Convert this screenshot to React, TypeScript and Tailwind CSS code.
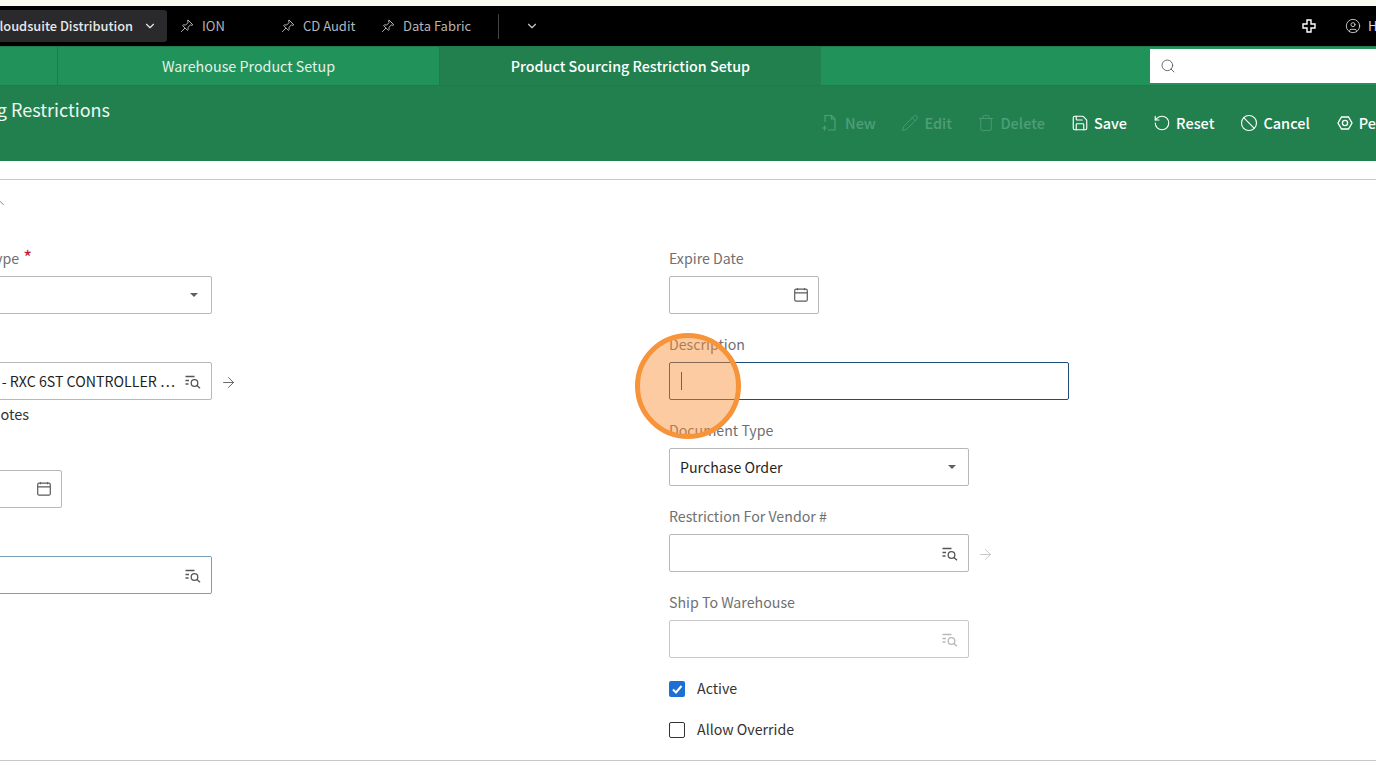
import { Ban, ChevronDown, ChevronUp, CircleUser, RotateCcw, Save, Search, ArrowRight, Pencil, Trash } from 'lucide-react'

function PinIcon() {
  return (
    <svg width="14" height="14" viewBox="0 0 14 14" fill="none" stroke="#b5b5b5" strokeWidth="1" strokeLinejoin="round" strokeLinecap="round">
      <path d="M8.200 1.200 12.800 5.800 11.900 6.300 10.300 6 7.900 8.400 8.200 10.600 7.300 11.400 2.600 6.700 3.400 5.800 5.600 6.100 8 3.700 7.700 2.100Z" />
      <path d="M4.800 9.200 1.400 12.600" />
    </svg>
  )
}

function NewIcon() {
  return (
    <svg width="16" height="18" viewBox="0 0 16 18" fill="none" stroke="currentColor" strokeWidth="1.200">
      <path d="M4 8V1.500h6.500L14 5v11H7" />
      <path d="M10.500 1.500V5H14" />
      <path d="M1 14h5M3.500 11.500v5" />
    </svg>
  )
}

function HexIcon() {
  return (
    <svg width="16" height="16" viewBox="0 0 16 16" fill="none" stroke="currentColor" strokeWidth="1.300">
      <path d="M4.500 2h7L15 8l-3.500 6h-7L1 8Z" />
      <circle cx="8" cy="8" r="2.600" />
    </svg>
  )
}

function PlusIcon() {
  return (
    <svg width="14" height="14" viewBox="0 0 14 14" fill="none" stroke="white" strokeWidth="1.400" className="shrink-0">
      <path d="M5 1h4v4h4v4H9v4H5V9H1V5h4Z" />
    </svg>
  )
}

function CalendarIcon() {
  return (
    <svg width="14" height="14" viewBox="0 0 14 14" fill="none" stroke="#5a5a5a" strokeWidth="1.200">
      <rect x="0.700" y="1.200" width="12.600" height="12" rx="1.500" />
      <path d="M1 4.800h12M3.500 0.300v2M10.500 0.300v2" />
    </svg>
  )
}

function LookupIcon({ muted }: { muted?: boolean }) {
  return (
    <svg width="16" height="14" viewBox="0 0 16 14" fill="none" stroke={muted ? '#b8b8b8' : '#555555'} strokeWidth="1.300">
      <path d="M0.500 1.500h9M0.500 5.500h3.500M0.500 9h3" />
      <circle cx="9.500" cy="8" r="3.300" />
      <path d="M12 10.500 15 13.300" />
    </svg>
  )
}

function Caret() {
  return <span className="h-0 w-0 border-x-[4px] border-t-[4px] border-x-transparent border-t-[#5f5f5f]" />
}

function Label({ children }: { children: React.ReactNode }) {
  return <div className="h-[24px] text-[14.200px] leading-[12px] text-[#707070] whitespace-nowrap">{children}</div>
}

function Box({ className, children }: { className: string; children?: React.ReactNode }) {
  return (
    <div className={`flex h-[38px] items-center rounded-[2px] border bg-white text-[14.200px] text-[#1f1f1f] ${className}`}>
      {children}
    </div>
  )
}

const disabledActions = [
  { label: 'New', gap: 'gap-[8px]', icon: <NewIcon /> },
  { label: 'Edit', gap: 'gap-[6px]', icon: <Pencil size={18} strokeWidth={1.1} className="-mx-[1px]" /> },
  { label: 'Delete', gap: 'gap-[6px]', icon: <Trash size={18} strokeWidth={1.1} className="-mx-[1px]" /> },
]

const actions = [
  { label: 'Save', icon: <Save size={18} strokeWidth={1.5} className="-mx-[1px]" /> },
  { label: 'Reset', icon: <RotateCcw size={18} strokeWidth={1.5} className="-mx-[1px]" /> },
  { label: 'Cancel', icon: <Ban size={18} strokeWidth={1.5} className="-mx-[1px]" /> },
  { label: 'Personalize', icon: <HexIcon /> },
]

export default function App() {
  return (
    <div className="relative h-[769px] w-[1376px] overflow-hidden bg-white font-['Noto_Sans_CJK_SC','Noto_Sans',sans-serif]">
      <div className="h-[6px] bg-[#f9fbf1]" />

      <div className="flex h-[40px] items-center bg-black text-[13px]">
        <div className="flex h-[32px] w-[167px] items-center justify-end rounded-r-[3px] bg-[#2a2a2c] pr-[10px] text-[12.800px] font-medium text-[#e8e8e8] whitespace-nowrap">
          <span>Cloudsuite Distribution</span>
          <ChevronDown size={14} className="ml-[10px] shrink-0" />
        </div>
        <div className="ml-[13px] flex w-[101px] items-center gap-[8px] text-[#b5b5b5]"><PinIcon /> ION</div>
        <div className="flex w-[100px] items-center gap-[8px] text-[#b5b5b5]"><PinIcon /> CD Audit</div>
        <div className="flex w-[117px] items-center gap-[8px] text-[#b5b5b5] whitespace-nowrap"><PinIcon /> Data Fabric</div>
        <div className="h-[25px] w-px bg-[#444444]" />
        <ChevronDown size={14} className="ml-[26px] text-[#c8c8c8]" />
        <div className="ml-auto flex w-[74px] items-center gap-[29px] text-white">
          <PlusIcon />
          <div className="flex items-center gap-[7px] text-[#d8d8d8]">
            <CircleUser size={16} strokeWidth={1.3} className="shrink-0" />
            <span>H</span>
          </div>
        </div>
      </div>

      <div className="flex h-[40px] border-y border-[#1f7a4c] bg-[#21925a] text-[14.300px] text-[#e4f2ea]">
        <div className="w-[58px] border-r border-[#1f7a4c]" />
        <div className="flex w-[382px] items-center justify-center border-r border-[#1f7a4c]">Warehouse Product Setup</div>
        <div className="flex w-[381px] items-center justify-center bg-[#22804f] font-medium text-white">Product Sourcing Restriction Setup</div>
        <div className="ml-auto mt-[2px] flex h-[34px] w-[226px] items-center bg-white pl-[10px]">
          <Search size={16} strokeWidth={1.4} className="text-[#5f5f5f]" />
        </div>
      </div>

      <div className="flex h-[75px] bg-[#22804f]">
        <div className="mt-[9px] flex h-[28px] w-[110px] items-center justify-end text-[18px] text-[#eef6f1] whitespace-nowrap">
          <span>Product Sourcing Restrictions</span>
        </div>
        <div className="ml-[711px] mt-[27px] flex h-[20px] items-center gap-[27px] text-[14.500px] font-medium whitespace-nowrap">
          <div className="flex items-center gap-[26.500px]">
            {disabledActions.map((a) => (
              <div key={a.label} className={`flex items-center text-[#4f9e77] ${a.gap}`}>
                {a.icon}
                <span>{a.label}</span>
              </div>
            ))}
          </div>
          {actions.map((a) => (
            <div key={a.label} className="flex items-center gap-[6px] text-white">
              {a.icon}
              <span>{a.label}</span>
            </div>
          ))}
        </div>
      </div>

      <div className="mt-[18px] h-[582px] border-y border-[#c8c8c8]">
        <ChevronUp size={14} strokeWidth={1.3} className="ml-[-7px] mt-[16px] text-[#5f5f5f]" />

        <div className="mt-[42px] grid grid-cols-[669px_1fr]">
          <div>
            <div className="h-[86px]">
              <div className="flex h-[24px] w-[18px] justify-end text-[14.200px] leading-[12px] whitespace-nowrap text-[#707070]">
                <span>Type</span><span className="ml-[4px] mr-[-14px] text-[19px] leading-[10px] text-[#c0213a]">*</span>
              </div>
              <Box className="ml-[-8px] w-[220px] justify-end border-[#b8b8b8] pr-[13px]"><Caret /></Box>
            </div>
            <div className="h-[132px] pt-[24px]">
              <div className="flex items-center">
                <Box className="ml-[-8px] w-[220px] justify-end border-[#b8b8b8] pr-[10px] pt-[2px] whitespace-nowrap">
                  <span className="mr-[10px]">- RXC 6ST CONTROLLER …</span>
                  <LookupIcon />
                </Box>
                <ArrowRight size={17} strokeWidth={1.3} className="ml-[8px] mt-[2px] text-[#5f5f5f]" />
              </div>
              <div className="mt-[4px] flex w-[29px] justify-end text-[14.500px] leading-[20px] text-[#333333]"><span>Notes</span></div>
            </div>
            <div className="h-[86px]">
              <Box className="ml-[-8px] w-[70px] justify-end border-[#b8b8b8] pr-[10px]"><CalendarIcon /></Box>
            </div>
            <Box className="ml-[-8px] w-[220px] justify-end border-[#7a9fb8] pr-[10px] pt-[2px]"><LookupIcon /></Box>
          </div>

          <div>
            <div className="h-[86px]">
              <Label>Expire Date</Label>
              <Box className="w-[150px] justify-end border-[#b8b8b8] pr-[10px]"><CalendarIcon /></Box>
            </div>
            <div className="h-[86px]">
              <Label>Description</Label>
              <Box className="w-[400px] border-[#1f4f78] pl-[11px]"><span className="h-[18px] w-px bg-[#333333]" /></Box>
            </div>
            <div className="h-[86px]">
              <Label>Document Type</Label>
              <Box className="w-[300px] justify-between border-[#b8b8b8] pl-[10px] pr-[12px]"><span className="pt-[2px]">Purchase Order</span><Caret /></Box>
            </div>
            <div className="h-[86px]">
              <Label>Restriction For Vendor #</Label>
              <div className="flex items-center">
                <Box className="w-[300px] justify-end border-[#b8b8b8] pr-[10px] pt-[2px]"><LookupIcon /></Box>
                <ArrowRight size={17} strokeWidth={1.3} className="ml-[8px] mt-[2px] text-[#c4c4c4]" />
              </div>
            </div>
            <div className="h-[86px]">
              <Label>Ship To Warehouse</Label>
              <Box className="w-[300px] justify-end border-[#c8c8c8] pr-[10px] pt-[2px]"><LookupIcon muted /></Box>
            </div>
            <div className="mt-[-14px] flex h-[41px] items-center gap-[12px] text-[14.200px] text-[#333333]">
              <span className="flex h-[16px] w-[16px] items-center justify-center rounded-[2px] bg-[#1d6fd6]">
                <svg width="12" height="12" viewBox="0 0 12 12" fill="none" stroke="white" strokeWidth="2"><path d="M2 6.500 5 9.500 10.500 3" /></svg>
              </span>
              Active
            </div>
            <div className="flex h-[41px] items-center gap-[12px] text-[14.200px] text-[#333333]">
              <span className="h-[16px] w-[16px] rounded-[2px] border border-[#333333]" />
              Allow Override
            </div>
          </div>
        </div>
      </div>

      <div className="absolute left-[635px] top-[333px] h-[106px] w-[106px] rounded-full border-[5px] border-[#f79339] bg-[#fb8c2e]/45" />
    </div>
  )
}
